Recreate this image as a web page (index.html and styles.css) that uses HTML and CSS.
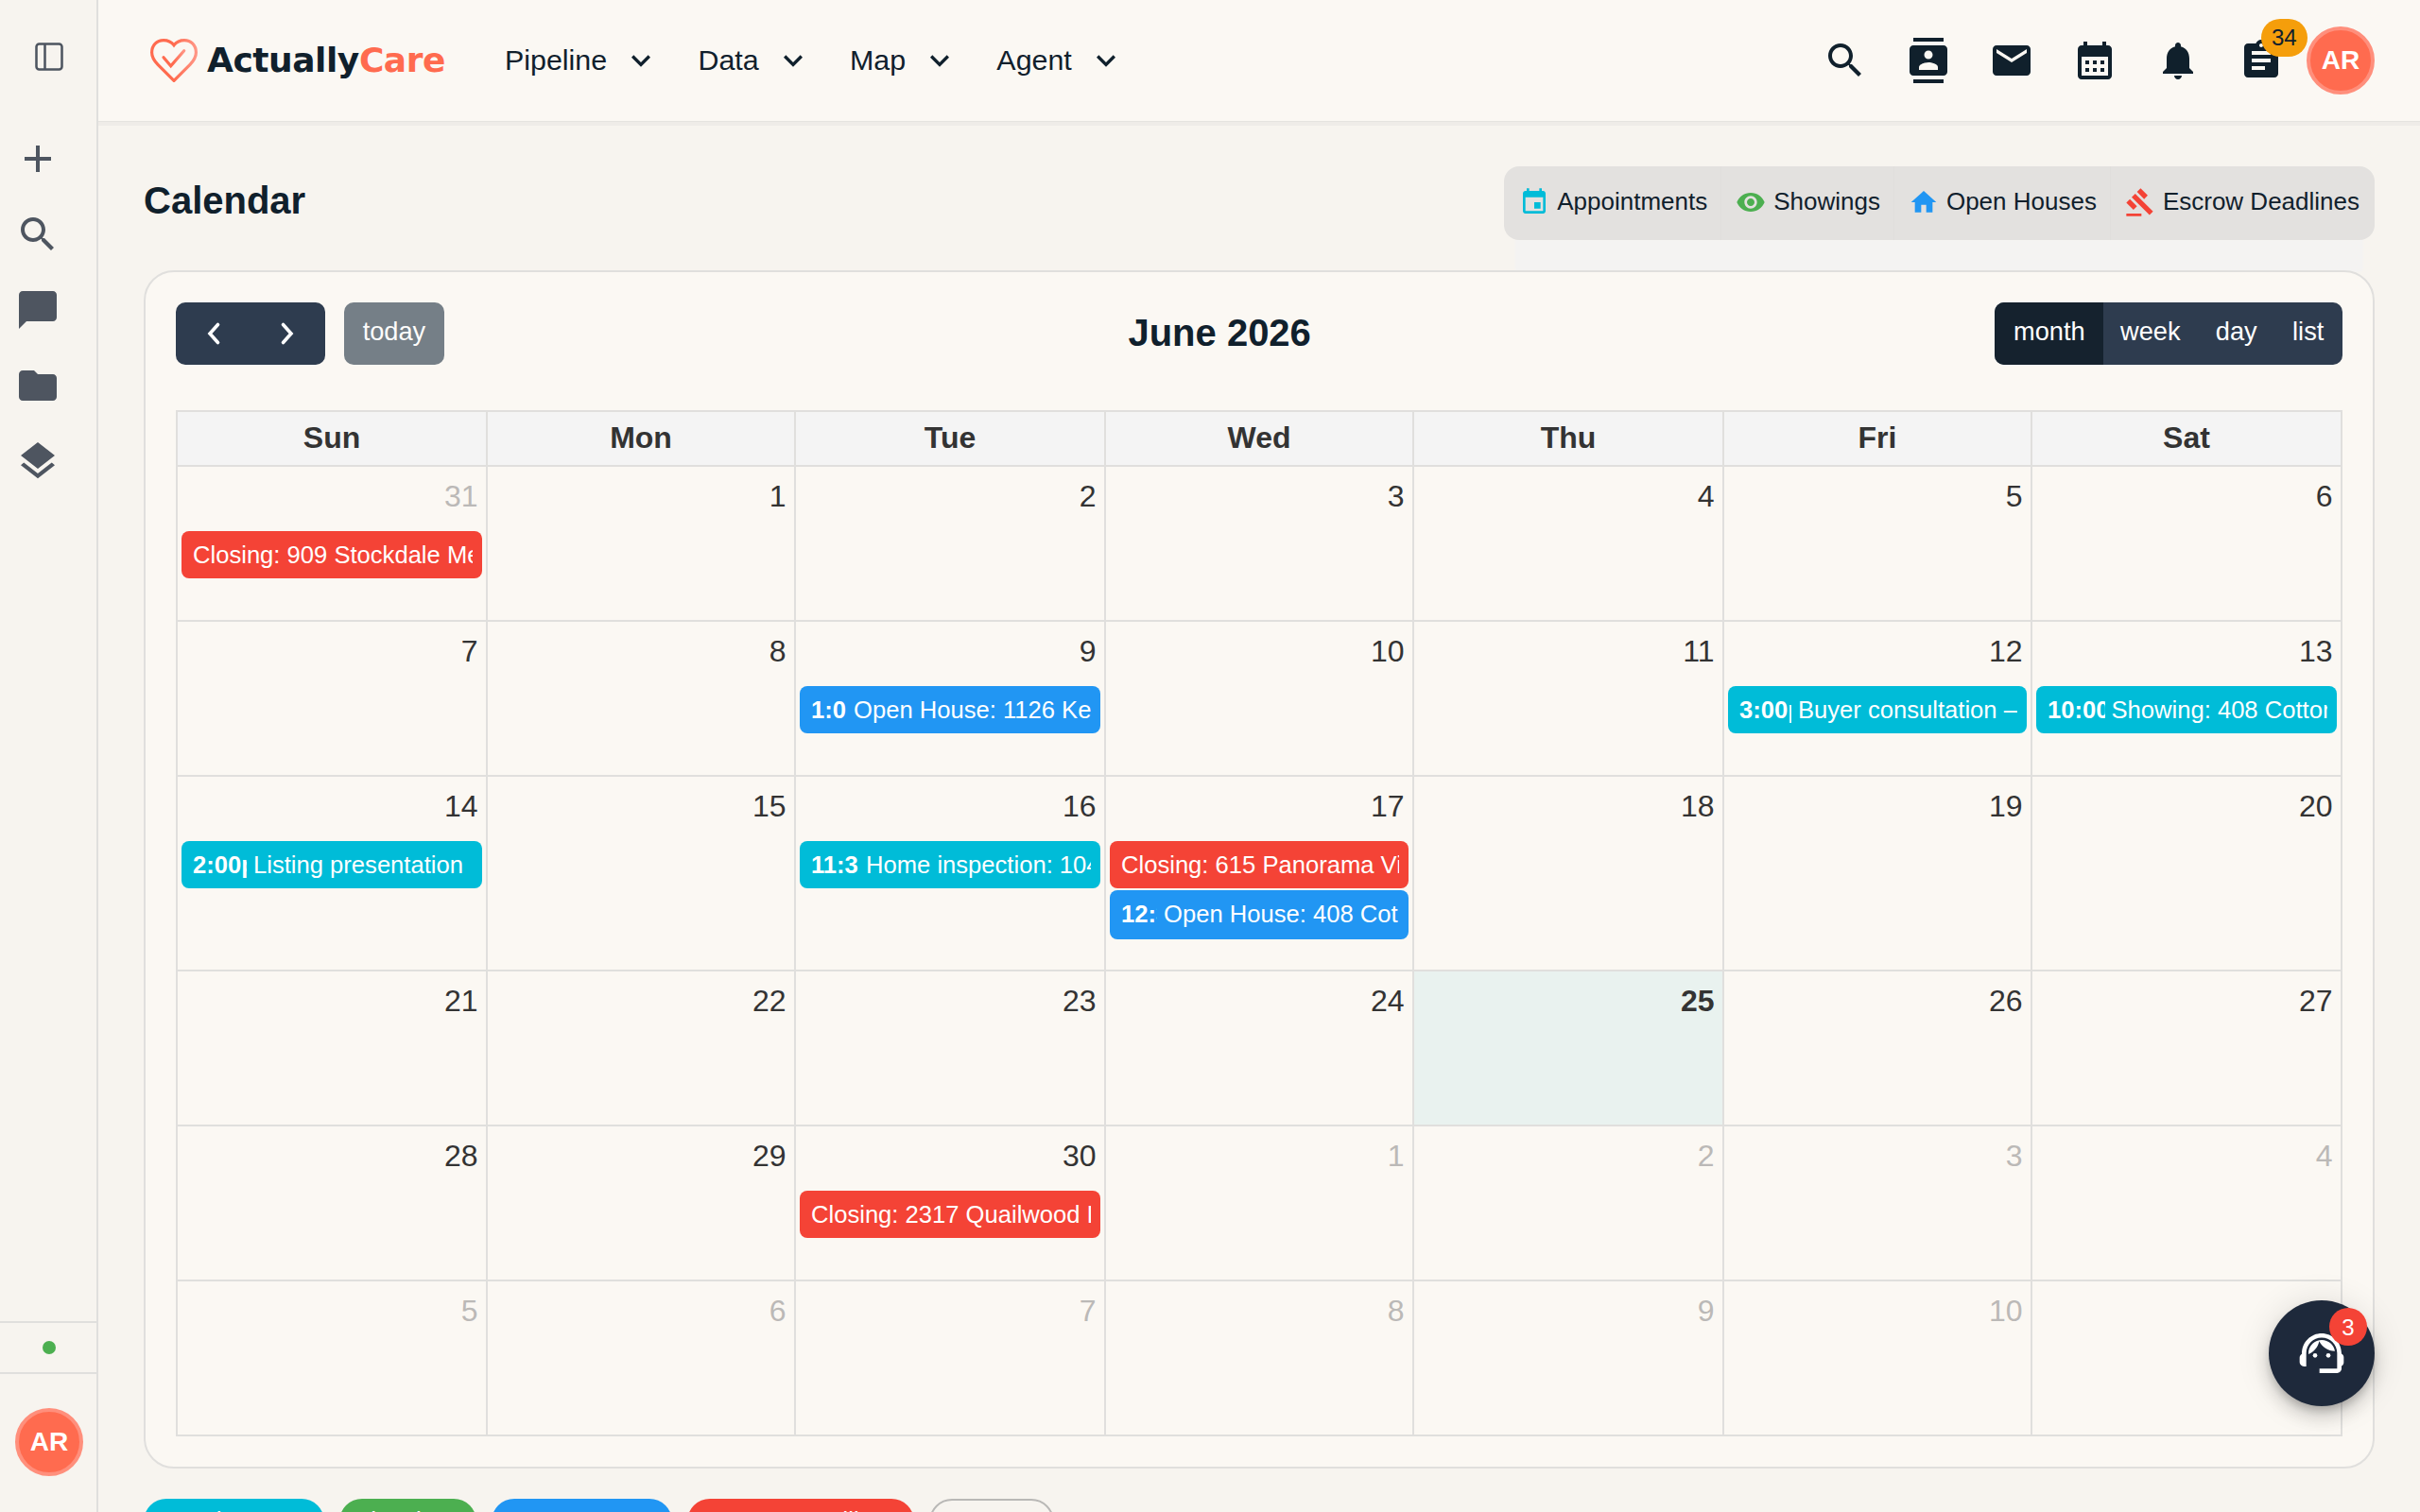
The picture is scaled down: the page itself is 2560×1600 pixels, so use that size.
FILE: index.html
```html
<!DOCTYPE html>
<html lang="en">
<head>
<meta charset="utf-8">
<title>ActuallyCare – Calendar</title>
<link rel="stylesheet" href="styles.css">
</head>
<body>
<div class="app">
  <aside class="sidebar">
    <div class="sidebar-top">
      <svg class="icon-panel" viewBox="0 0 24 24"><rect x="3" y="3" width="18" height="18" rx="2"/><path d="M9 3v18"/></svg>
    </div>
    <nav class="sidebar-nav">
      <svg class="icon" viewBox="0 0 24 24"><path d="M19 13h-6v6h-2v-6H5v-2h6V5h2v6h6v2z"/></svg>
      <svg class="icon" viewBox="0 0 24 24"><path d="M15.5 14h-.79l-.28-.27C15.41 12.59 16 11.11 16 9.5 16 5.91 13.09 3 9.5 3S3 5.91 3 9.5 5.91 16 9.5 16c1.61 0 3.09-.59 4.23-1.57l.27.28v.79l5 4.99L20.49 19l-4.99-5zm-6 0C7.01 14 5 11.99 5 9.5S7.01 5 9.5 5 14 7.01 14 9.5 11.99 14 9.5 14z"/></svg>
      <svg class="icon" viewBox="0 0 24 24"><path d="M20 2H4c-1.1 0-1.99.9-1.99 2L2 22l4-4h14c1.1 0 2-.9 2-2V4c0-1.1-.9-2-2-2z"/></svg>
      <svg class="icon" viewBox="0 0 24 24"><path d="M10 4H4c-1.1 0-1.99.9-1.99 2L2 18c0 1.1.9 2 2 2h16c1.1 0 2-.9 2-2V8c0-1.1-.9-2-2-2h-8l-2-2z"/></svg>
      <svg class="icon" viewBox="0 0 24 24"><path d="m11.99 18.54-7.37-5.73L3 14.07l9 7 9-7-1.63-1.27-7.38 5.74zM12 16l7.36-5.73L21 9l-9-7-9 7 1.63 1.27L12 16z"/></svg>
    </nav>
    <div class="sidebar-status"><span class="status-dot"></span></div>
    <div class="sidebar-user"><span class="avatar">AR</span></div>
  </aside>

  <div class="page">
    <header class="header">
      <div class="logo">
        <svg class="logo-heart" viewBox="0 0 50 46">
          <defs><linearGradient id="heart" x1="0" y1="0" x2="1" y2="0"><stop offset=".5" stop-color="#ff6b4f"/><stop offset="1" stop-color="#ff9584"/></linearGradient></defs>
          <path d="M25 44.4 8 27.3C4 23.3 1.6 19.5 1.6 14.5 1.6 7 7 1.6 14 1.6c4.500 0 8.500 2 11 5.200C27.500 3.600 31.500 1.600 36 1.600 43 1.600 48.400 7 48.400 14.500c0 5-2.400 8.800-6.400 12.800Z" stroke="url(#heart)"/>
          <path d="m14 19.700 7.700 9L35.700 12.700" stroke="url(#heart)"/>
        </svg>
        <span class="logo-text">Actually<span class="logo-accent">Care</span></span>
      </div>
      <nav class="main-nav">
        <a class="nav-item">Pipeline<svg class="chevron" viewBox="0 0 24 24"><path d="M7.410 8.590 12 13.170l4.590-4.580L18 10l-6 6-6-6 1.410-1.410z"/></svg></a>
        <a class="nav-item">Data<svg class="chevron" viewBox="0 0 24 24"><path d="M7.410 8.590 12 13.170l4.590-4.580L18 10l-6 6-6-6 1.410-1.410z"/></svg></a>
        <a class="nav-item">Map<svg class="chevron" viewBox="0 0 24 24"><path d="M7.410 8.590 12 13.170l4.590-4.580L18 10l-6 6-6-6 1.410-1.410z"/></svg></a>
        <a class="nav-item">Agent<svg class="chevron" viewBox="0 0 24 24"><path d="M7.410 8.590 12 13.170l4.590-4.580L18 10l-6 6-6-6 1.410-1.410z"/></svg></a>
      </nav>
      <div class="header-actions">
        <span class="action"><svg class="icon" viewBox="0 0 24 24"><path d="M15.5 14h-.79l-.28-.27C15.41 12.59 16 11.11 16 9.5 16 5.91 13.09 3 9.5 3S3 5.91 3 9.5 5.91 16 9.5 16c1.61 0 3.09-.59 4.23-1.57l.27.28v.79l5 4.99L20.49 19l-4.99-5zm-6 0C7.01 14 5 11.99 5 9.5S7.01 5 9.5 5 14 7.01 14 9.5 11.99 14 9.5 14z"/></svg></span>
        <span class="action"><svg class="icon" viewBox="0 0 24 24"><path d="M20 0H4v2h16V0zM4 24h16v-2H4v2zM20 4H4c-1.1 0-2 .9-2 2v12c0 1.1.9 2 2 2h16c1.1 0 2-.9 2-2V6c0-1.1-.9-2-2-2zm-8 2.750c1.240 0 2.250 1.010 2.250 2.250s-1.010 2.250-2.250 2.250S9.750 10.240 9.750 9 10.760 6.750 12 6.750zM17 17H7v-1.500c0-1.670 3.330-2.500 5-2.500s5 .830 5 2.500V17z"/></svg></span>
        <span class="action"><svg class="icon" viewBox="0 0 24 24"><path d="M20 4H4c-1.100 0-1.990.9-1.990 2L2 18c0 1.100.9 2 2 2h16c1.100 0 2-.9 2-2V6c0-1.100-.9-2-2-2zm0 4-8 5-8-5V6l8 5 8-5v2z"/></svg></span>
        <span class="action"><svg class="icon" viewBox="0 0 24 24"><path d="M19 4h-1V2h-2v2H8V2H6v2H5c-1.110 0-1.990.9-1.990 2L3 20c0 1.100.89 2 2 2h14c1.100 0 2-.9 2-2V6c0-1.100-.9-2-2-2zm0 16H5V10h14v10zM9 14H7v-2h2v2zm4 0h-2v-2h2v2zm4 0h-2v-2h2v2zm-8 4H7v-2h2v2zm4 0h-2v-2h2v2zm4 0h-2v-2h2v2z"/></svg></span>
        <span class="action"><svg class="icon" viewBox="0 0 24 24"><path d="M12 22c1.100 0 2-.9 2-2h-4c0 1.100.89 2 2 2zm6-6v-5c0-3.070-1.640-5.640-4.500-6.320V4c0-.83-.67-1.500-1.500-1.500s-1.500.67-1.500 1.500v.68C7.630 5.360 6 7.920 6 11v5l-2 2v1h16v-1l-2-2z"/></svg></span>
        <span class="action"><svg class="icon" viewBox="0 0 24 24"><path d="M19 3h-4.180C14.400 1.840 13.300 1 12 1c-1.300 0-2.400.84-2.820 2H5c-1.100 0-2 .9-2 2v14c0 1.100.9 2 2 2h14c1.100 0 2-.9 2-2V5c0-1.100-.9-2-2-2zm-7 0c.55 0 1 .45 1 1s-.45 1-1 1-1-.45-1-1 .45-1 1-1zm2 14H7v-2h7v2zm3-4H7v-2h10v2zm0-4H7V7h10v2z"/></svg><span class="badge">34</span></span>
        <span class="avatar">AR</span>
      </div>
    </header>

    <main class="main">
      <div class="title-row">
        <h1 class="title">Calendar</h1>
        <div class="legend">
          <span class="legend-item"><svg class="legend-icon is-appointment" viewBox="0 0 24 24"><path d="M17 12h-5v5h5v-5zM16 1v2H8V1H6v2H5c-1.110 0-1.990.9-1.990 2L3 19c0 1.100.89 2 2 2h14c1.100 0 2-.9 2-2V5c0-1.100-.9-2-2-2h-1V1h-2zm3 18H5V8h14v11z"/></svg><span>Appointments</span></span>
          <span class="legend-item"><svg class="legend-icon is-showing" viewBox="0 0 24 24"><path d="M12 4.500C7 4.500 2.730 7.610 1 12c1.730 4.390 6 7.500 11 7.500s9.270-3.110 11-7.500c-1.730-4.390-6-7.500-11-7.500zM12 17c-2.760 0-5-2.240-5-5s2.240-5 5-5 5 2.240 5 5-2.240 5-5 5zm0-8c-1.660 0-3 1.340-3 3s1.340 3 3 3 3-1.340 3-3-1.340-3-3-3z"/></svg><span>Showings</span></span>
          <span class="legend-item"><svg class="legend-icon is-open-house" viewBox="0 0 24 24"><path d="M10 20v-6h4v6h5v-8h3L12 3 2 12h3v8z"/></svg><span>Open Houses</span></span>
          <span class="legend-item"><svg class="legend-icon is-escrow" viewBox="0 0 24 24"><path d="M1 21h12v2H1zM5.245 8.070l2.830-2.827 14.140 14.142-2.828 2.828zM12.317 1l5.657 5.656-2.830 2.830-5.654-5.660zM3.825 9.485l5.657 5.657-2.828 2.828-5.657-5.657z"/></svg><span>Escrow Deadlines</span></span>
        </div>
      </div>

      <section class="card">
        <div class="toolbar">
          <div class="toolbar-start">
            <div class="btn-group">
              <span class="btn btn-arrow"><svg viewBox="0 0 40 40"><path d="m24.500 10.500-8.500 9.500 8.500 9.500"/></svg></span>
              <span class="btn btn-arrow"><svg viewBox="0 0 40 40"><path d="m15.500 10.500 8.500 9.500-8.500 9.500"/></svg></span>
            </div>
            <div class="btn-group is-disabled"><span class="btn">today</span></div>
          </div>
          <h2 class="month-title">June 2026</h2>
          <div class="toolbar-end">
            <div class="btn-group">
              <span class="btn is-active">month</span><span class="btn">week</span><span class="btn">day</span><span class="btn">list</span>
            </div>
          </div>
        </div>

        <div class="month">
          <div class="weekday">Sun</div><div class="weekday">Mon</div><div class="weekday">Tue</div><div class="weekday">Wed</div><div class="weekday">Thu</div><div class="weekday">Fri</div><div class="weekday">Sat</div>

          <div class="day"><div class="num is-other">31</div><div class="event is-escrow"><span class="name">Closing: 909 Stockdale Me</span></div></div>
          <div class="day"><div class="num">1</div></div>
          <div class="day"><div class="num">2</div></div>
          <div class="day"><div class="num">3</div></div>
          <div class="day"><div class="num">4</div></div>
          <div class="day"><div class="num">5</div></div>
          <div class="day"><div class="num">6</div></div>

          <div class="day"><div class="num">7</div></div>
          <div class="day"><div class="num">8</div></div>
          <div class="day"><div class="num">9</div><div class="event is-open-house"><span class="time time-xs">1:0</span><span class="name">Open House: 1126 Ke</span></div></div>
          <div class="day"><div class="num">10</div></div>
          <div class="day"><div class="num">11</div></div>
          <div class="day"><div class="num">12</div><div class="event is-appointment"><span class="time time-md">3:00p</span><span class="name">Buyer consultation –</span></div></div>
          <div class="day"><div class="num">13</div><div class="event is-appointment"><span class="time time-xl">10:00</span><span class="name">Showing: 408 Cotton</span></div></div>

          <div class="day"><div class="num">14</div><div class="event is-appointment"><span class="time time-lg">2:00p</span><span class="name">Listing presentation</span></div></div>
          <div class="day"><div class="num">15</div></div>
          <div class="day"><div class="num">16</div><div class="event is-appointment"><span class="time time-sm">11:3</span><span class="name">Home inspection: 104</span></div></div>
          <div class="day"><div class="num">17</div><div class="event is-escrow"><span class="name">Closing: 615 Panorama Vi</span></div><div class="event is-tall is-open-house"><span class="time time-xs">12:3</span><span class="name">Open House: 408 Cot</span></div></div>
          <div class="day"><div class="num">18</div></div>
          <div class="day"><div class="num">19</div></div>
          <div class="day"><div class="num">20</div></div>

          <div class="day"><div class="num">21</div></div>
          <div class="day"><div class="num">22</div></div>
          <div class="day"><div class="num">23</div></div>
          <div class="day"><div class="num">24</div></div>
          <div class="day is-today"><div class="num">25</div></div>
          <div class="day"><div class="num">26</div></div>
          <div class="day"><div class="num">27</div></div>

          <div class="day"><div class="num">28</div></div>
          <div class="day"><div class="num">29</div></div>
          <div class="day"><div class="num">30</div><div class="event is-escrow"><span class="name">Closing: 2317 Quailwood D</span></div></div>
          <div class="day"><div class="num is-other">1</div></div>
          <div class="day"><div class="num is-other">2</div></div>
          <div class="day"><div class="num is-other">3</div></div>
          <div class="day"><div class="num is-other">4</div></div>

          <div class="day"><div class="num is-other">5</div></div>
          <div class="day"><div class="num is-other">6</div></div>
          <div class="day"><div class="num is-other">7</div></div>
          <div class="day"><div class="num is-other">8</div></div>
          <div class="day"><div class="num is-other">9</div></div>
          <div class="day"><div class="num is-other">10</div></div>
          <div class="day"></div>
        </div>
      </section>

      <div class="chips">
        <span class="chip is-appointment">Appointments</span>
        <span class="chip is-showing">Showings</span>
        <span class="chip is-open-house">Open Houses</span>
        <span class="chip is-escrow">Escrow Deadlines</span>
        <span class="chip is-outlined">9 events</span>
      </div>
    </main>
  </div>

  <div class="fab">
    <svg viewBox="0 0 24 24"><path d="M21 12.220C21 6.730 16.740 3 12 3c-4.690 0-9 3.650-9 9.280-.6.340-1 .980-1 1.720v2c0 1.100.9 2 2 2h1v-6.100c0-3.870 3.130-7 7-7s7 3.130 7 7V19h-8v2h8c1.100 0 2-.9 2-2v-1.220c.59-.31 1-.92 1-1.640v-2.300c0-.7-.41-1.310-1-1.620z"/><circle cx="9" cy="13" r="1"/><circle cx="15" cy="13" r="1"/><path d="M18 11.030C17.520 8.180 15.040 6 12.050 6c-3.030 0-6.290 2.510-6.030 6.450 2.470-1.010 4.330-3.210 4.860-5.890 1.310 2.630 4 4.440 7.120 4.470z"/></svg>
    <span class="fab-badge">3</span>
  </div>
</div>
</body>
</html>
```
FILE: styles.css
```css
:root {
  --ink: #10202c;
  --bg: #f7f4ef;
  --surface: #fbf8f3;
  --line: #e0dfdd;
  --coral: #ff6b4f;
  --appointment: #00bcd8;
  --showing: #4caf50;
  --open-house: #2196f3;
  --escrow: #f44336;
}

* { box-sizing: border-box; }

body {
  margin: 0;
  height: 1600px;
  overflow: hidden;
  background: var(--bg);
  color: var(--ink);
  font-family: "Liberation Sans", Arial, Helvetica, sans-serif;
}

svg { display: block; fill: currentColor; flex: none; }
h1, h2 { margin: 0; }

.app { display: flex; height: 1600px; }
.icon { width: 48px; height: 48px; }

/* Sidebar */
.sidebar {
  flex: none;
  width: 104px;
  display: flex;
  flex-direction: column;
  border-right: 2px solid var(--line);
  color: #4e5560;
}
.sidebar-top { height: 144px; padding: 42px 0 0 34px; }
.icon-panel { width: 36px; height: 36px; fill: none; stroke: currentColor; stroke-width: 1.7; }
.sidebar-nav { flex: 1; display: flex; flex-direction: column; gap: 32px; padding-left: 16px; }
.sidebar-status {
  height: 54px;
  display: flex;
  align-items: center;
  padding-left: 45px;
  border-top: 2px solid var(--line);
}
.status-dot { width: 14px; height: 14px; border-radius: 50%; background: var(--showing); }
.sidebar-user {
  height: 148px;
  display: flex;
  align-items: center;
  padding: 0 0 2px 16px;
  border-top: 2px solid var(--line);
}
.avatar {
  flex: none;
  width: 72px;
  height: 72px;
  display: flex;
  align-items: center;
  justify-content: center;
  border: 4px solid #ff8f7c;
  border-radius: 50%;
  background: var(--coral);
  color: #fff;
  font-size: 28px;
  font-weight: 700;
}

/* Header */
.page { flex: 1; min-width: 0; }
.header {
  height: 128px;
  display: flex;
  align-items: center;
  padding: 0 48px 0 55px;
  background: var(--surface);
  box-shadow: 0 1px 0 #e5e3e0, 0 5px 0 #efece8;
}
.logo { width: 375px; display: flex; align-items: center; gap: 10px; }
.logo-heart { width: 50px; height: 46px; fill: none; stroke-width: 3.2; stroke-linecap: round; }
.logo-text {
  padding-bottom: 1px;
  font-family: "DejaVu Sans", Verdana, sans-serif;
  font-size: 36px;
  font-weight: 700;
  letter-spacing: -.45px;
}
.logo-accent { color: var(--coral); }
.main-nav { flex: 1; display: flex; gap: 40px; padding-bottom: 1px; }
.nav-item { display: flex; align-items: center; gap: 16.3px; font-size: 30.4px; }
.chevron { width: 40px; height: 40px; }
.header-actions { display: flex; align-items: center; }
.action { position: relative; width: 88px; display: flex; justify-content: center; }
.header-actions .avatar { margin-left: 4px; }
.badge {
  position: absolute;
  top: -20px;
  left: 43.5px;
  height: 40px;
  padding: 0 11.500px;
  border-radius: 20px;
  background: #f59e0b;
  font-size: 24px;
  line-height: 40px;
}

/* Title and legend */
.main { padding: 48px 48px 0; }
.title-row {
  height: 78px;
  margin-bottom: 32px;
  display: flex;
  align-items: center;
  justify-content: space-between;
}
.title { padding-bottom: 5px; font-size: 40px; font-weight: 700; }
.legend {
  height: 78px;
  display: flex;
  border-radius: 16px;
  background: #e3e1df;
  box-shadow: 0 46px 2px -12px #f4f3f2;
}
.legend-item {
  display: flex;
  align-items: center;
  gap: 8px;
  padding: 0 16px 2px;
  font-size: 26px;
}
.legend-item + .legend-item { margin-left: -2px; border-left: 1px solid #e0dedc; padding-left: 15px; }
.legend-item span { padding-bottom: 2px; }
.legend-icon { width: 32px; height: 32px; }
.legend-icon.is-appointment { color: var(--appointment); }
.legend-icon.is-showing { color: var(--showing); }
.legend-icon.is-open-house { color: var(--open-house); }
.legend-icon.is-escrow { color: var(--escrow); }

/* Calendar card */
.card {
  position: relative;
  padding: 32px;
  border: 2px solid var(--line);
  border-radius: 32px;
  background: var(--surface);
}
.toolbar {
  height: 66px;
  margin-bottom: 48px;
  display: flex;
  justify-content: space-between;
  align-items: center;
}
.toolbar-start { display: flex; gap: 20px; }
.btn-group {
  height: 66px;
  display: flex;
  border-radius: 10px;
  overflow: hidden;
  background: #2e3c4f;
  color: #fff;
}
.btn {
  display: flex;
  align-items: center;
  padding: 0 19.7px 5px;
  font-size: 27.2px;
}
.btn + .btn { margin-left: -2px; }
.btn.is-active { background: #15222e; }
.btn-arrow { width: 80px; justify-content: center; padding: 0; }
.btn-arrow svg { width: 40px; height: 40px; fill: none; stroke: currentColor; stroke-width: 3.6; stroke-linecap: round; }
.is-disabled { background: #757f87; color: #fdfcfb; }
.month-title { padding-bottom: 2px; font-size: 40px; font-weight: 700; }

.month {
  display: grid;
  grid-template-columns: 328px 326px 328px 326px 328px 326px 328px;
  grid-template-rows: 58px 164px 164px 206px 164px 164px 164px;
  border-right: 2px solid var(--line);
  border-bottom: 2px solid var(--line);
  color: #333;
}
.weekday, .day { border-top: 2px solid var(--line); border-left: 2px solid var(--line); min-width: 0; }
.weekday {
  display: flex;
  align-items: center;
  justify-content: center;
  padding-bottom: 2px;
  background: #f4f4f4;
  font-size: 32px;
  font-weight: 700;
}
.num { height: 68px; padding: 12px 8.5px 0; font-size: 32px; line-height: 38px; text-align: right; }
.num.is-other { color: #bbb9b7; }
.is-today { background: #e9f2ef; }
.is-today .num { font-weight: 700; }

.event {
  height: 50px;
  margin: 0 4px 2px;
  padding: 0 10px 0 12px;
  display: flex;
  gap: 7px;
  border-radius: 8px;
  color: #fff;
  font-size: 25.6px;
  line-height: 50px;
}
.event.is-tall { height: 52px; }
.time, .name { overflow: hidden; white-space: nowrap; }
.time { flex: none; font-weight: 700; }
.time-xs { width: 38px; }
.time-sm { width: 51px; }
.time-md { width: 55px; }
.time-lg { width: 57px; }
.time-xl { width: 60.5px; }
.name { flex: 1; }
.event.is-appointment, .chip.is-appointment { background: var(--appointment); }
.chip.is-showing { background: var(--showing); }
.event.is-open-house, .chip.is-open-house { background: var(--open-house); }
.event.is-escrow, .chip.is-escrow { background: var(--escrow); }

/* Filter chips */
.chips { display: flex; gap: 16px; margin-top: 32px; }
.chip {
  height: 48px;
  padding: 0 16px;
  border-radius: 24px;
  color: #fff;
  font-size: 26px;
  line-height: 46px;
  white-space: nowrap;
}
.chip.is-outlined { width: 132px; padding: 0 14px; border: 2px solid #b9b8b6; color: #8d9295; line-height: 42px; }

/* Support button */
.fab {
  position: fixed;
  right: 48px;
  bottom: 112px;
  width: 112px;
  height: 112px;
  display: flex;
  align-items: center;
  justify-content: center;
  border-radius: 50%;
  background: #1e293b;
  color: #fff;
  box-shadow: 0 6px 10px -2px rgba(0, 0, 0, .2), 0 12px 20px rgba(0, 0, 0, .14), 0 2px 36px rgba(0, 0, 0, .12);
}
.fab svg { width: 56px; height: 56px; }
.fab-badge {
  position: absolute;
  top: 8px;
  right: 8px;
  width: 40px;
  height: 40px;
  border-radius: 50%;
  background: var(--escrow);
  font-size: 24px;
  line-height: 42px;
  text-align: center;
}
```
